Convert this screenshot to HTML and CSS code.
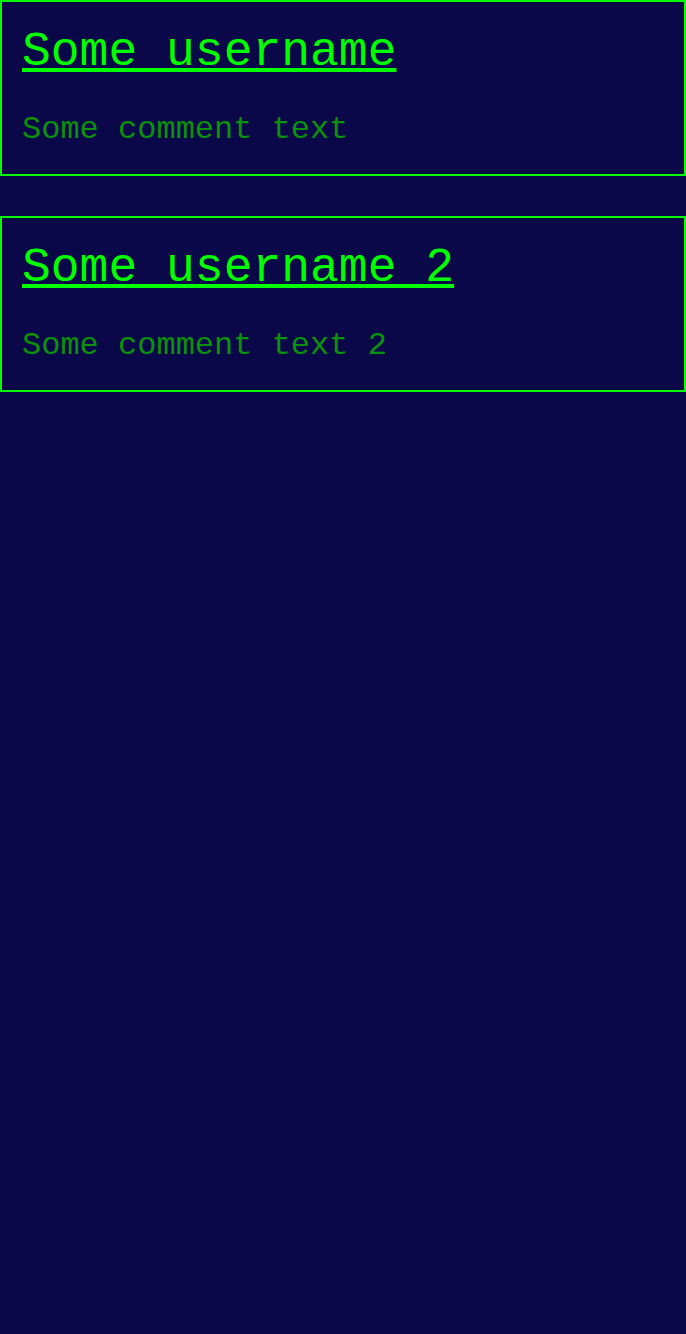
FILE: index.html
```html
<!DOCTYPE html>
<html>
<head>
<meta charset="utf-8">
<link rel="stylesheet" href="styles.css">
</head>
<body>
<div class="list">
  <div class="card">
    <a class="username" href="#">Some username</a>
    <p class="comment">Some comment text</p>
  </div>
  <div class="card">
    <a class="username" href="#">Some username 2</a>
    <p class="comment">Some comment text 2</p>
  </div>
</div>
</body>
</html>
```
FILE: styles.css
```css
html, body {
  margin: 0;
  padding: 0;
  background: #0a0848;
  min-height: 100%;
}
body {
  font-family: "Liberation Mono", monospace;
}
.list {
  display: flex;
  flex-direction: column;
  gap: 40px;
}
.card {
  border: 2px solid #00ff00;
  padding: 23px 20px 26px;
  display: flex;
  flex-direction: column;
  align-items: flex-start;
}
.username {
  font-size: 48px;
  color: #00ff00;
  text-decoration: underline;
}
.comment {
  margin: 32px 0 0;
  font-size: 32px;
  color: #0a920a;
}
```
